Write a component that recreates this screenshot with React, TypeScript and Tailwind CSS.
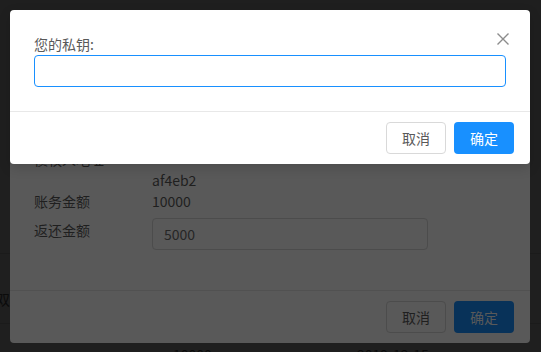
import React from "react";

const FONT = { fontFamily: '"Noto Sans CJK SC", "Noto Sans", sans-serif' };

function CloseIcon() {
  return (
    <svg width="12" height="12" viewBox="0 0 12 12" fill="none">
      <path d="M0.5 0.5 L11.5 11.5 M11.5 0.5 L0.5 11.5" stroke="#8c8c8c" strokeWidth="1.4" />
    </svg>
  );
}

export default function App() {
  return (
    <div
      className="relative h-[352px] w-[541px] overflow-hidden bg-[#1f1f1f] text-[14px] leading-[21px]"
      style={FONT}
    >
      {/* page behind both masks */}
      <div className="h-[253px]" />
      <div className="h-[70px] border-t border-[#1b1b1b] pt-[35px] text-[#0b0b0b]">
        <span className="ml-[-4px]">双方</span>
      </div>
      <div className="flex border-t border-[#1b1b1b] pt-[20px] text-[#0b0b0b]">
        <span className="ml-[173px] w-[184px]">10000</span>
        <span>2019-12-15</span>
      </div>

      {/* first modal, dimmed */}
      <div className="absolute left-[10px] top-[60px] flex h-[283px] w-[520px] flex-col rounded-[4px] bg-[#595959] text-[#1f1f1f]">
        <div className="flex-1 px-6 pt-[89px]">
          <div className="flex">
            <div className="w-[118px]">债权人地址</div>
            <div className="pt-[21px]">af4eb2</div>
          </div>
          <div className="flex">
            <div className="w-[118px]">账务金额</div>
            <div>10000</div>
          </div>
          <div className="mt-[6px] flex items-start">
            <div className="mt-[2px] w-[118px]">返还金额</div>
            <div className="flex h-8 w-[276px] items-center rounded-[4px] border border-[#4c4c4c] px-[11px] text-[#262626]">
              5000
            </div>
          </div>
        </div>
        <div className="flex justify-end gap-2 border-t border-[#515151] px-4 py-[10px]">
          <button className="h-8 w-[60px] rounded-[4px] border border-[#4c4c4c] text-[#1f1f1f]">
            取消
          </button>
          <button className="h-8 w-[60px] rounded-[4px] bg-[#083259] text-[#595959]">
            确定
          </button>
        </div>
      </div>

      {/* private key modal */}
      <div className="absolute left-[10px] top-[10px] w-[520px] rounded-[4px] bg-white shadow-[0_4px_12px_rgba(0,0,0,0.15)]">
        <button className="absolute right-0 top-0 flex h-14 w-14 items-center justify-center pl-[2px] pt-[2px]">
          <CloseIcon />
        </button>
        <div className="p-6">
          <div className="text-[#595959]">您的私钥:</div>
          <div className="h-8 rounded-[4px] border border-[#1890ff]" />
        </div>
        <div className="flex justify-end gap-2 border-t border-[#e8e8e8] px-4 py-[10px]">
          <button className="h-8 w-[60px] rounded-[4px] border border-[#d9d9d9] bg-white text-[#595959]">
            取消
          </button>
          <button className="h-8 w-[60px] rounded-[4px] bg-[#1890ff] text-white">
            确定
          </button>
        </div>
      </div>
    </div>
  );
}
